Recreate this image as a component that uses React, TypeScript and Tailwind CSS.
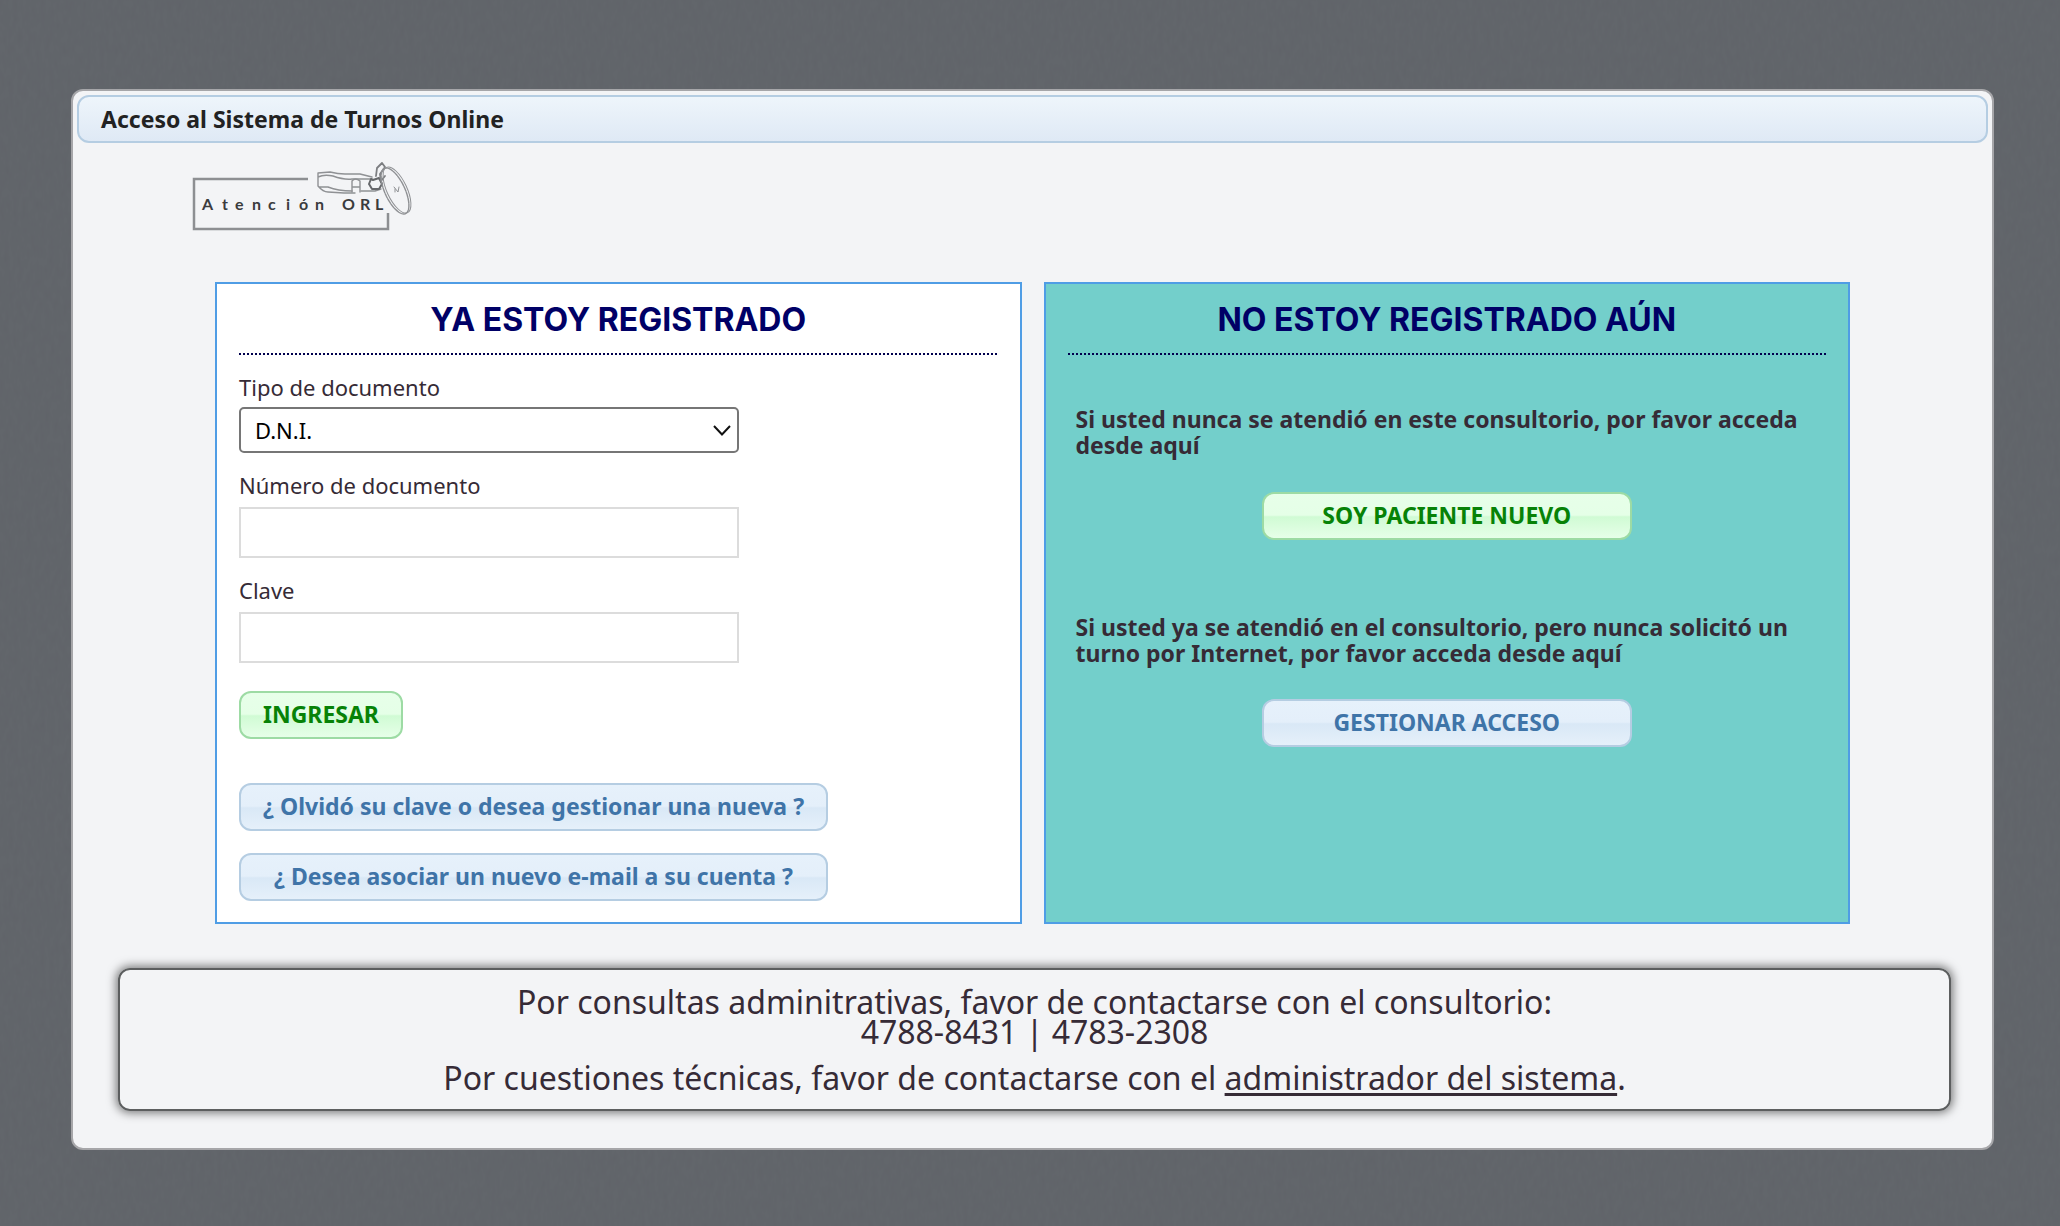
import type { ReactNode } from "react";

const BLUE_BUTTON =
  "border-[#b5cde2] bg-[linear-gradient(#e6f1fb_0%,#e4effa_48%,#d9e8f6_52%,#e5f0fa_100%)] text-[#3f74a8]";
const GREEN_BUTTON =
  "border-[#9ddba4] bg-[linear-gradient(#e7ffe9_0%,#e5ffe7_48%,#d0fbd4_52%,#e6ffe8_100%)] text-[#078207]";

function Button({
  tone,
  className = "",
  children,
}: {
  tone: "blue" | "green";
  className?: string;
  children: ReactNode;
}) {
  return (
    <button
      type="button"
      className={`h-12 cursor-pointer rounded-xl border-2 px-[22px] pb-0.5 text-[23px] leading-[26px] font-bold whitespace-nowrap ${
        tone === "blue" ? BLUE_BUTTON : GREEN_BUTTON
      } ${className}`}
    >
      {children}
    </button>
  );
}

function PanelTitle({ children }: { children: ReactNode }) {
  return (
    <>
      <h2 className="pt-[18px] pb-[15px] text-center font-['Inter',sans-serif] text-[32px] leading-9 font-bold text-[#000066]">
        {children}
      </h2>
      <div className="h-0.5 bg-[repeating-linear-gradient(90deg,#00004d_0px,#00004d_2px,transparent_2px,transparent_4px)]" />
    </>
  );
}

function TextField({ id, label, type }: { id: string; label: string; type: string }) {
  return (
    <div className="flex flex-col">
      <label htmlFor={id} className="mb-[9px] leading-[26px]">
        {label}
      </label>
      <input
        id={id}
        type={type}
        className="h-[51px] w-full border-2 border-[#dcdcdc] bg-white px-3 text-black"
      />
    </div>
  );
}

function Logo() {
  return (
    <svg
      role="img"
      aria-label="Atención ORL"
      viewBox="0 0 222 74"
      className="block h-[74px] w-[222px]"
      fill="none"
    >
      <path d="M116 19H2V69H196V53" stroke="#8d8f92" strokeWidth="2.5" />
      <text
        x="10 30 43 60 76 94 107 123 150 168 183"
        y="50"
        fontFamily="Lato, sans-serif"
        fontSize="16"
        fontWeight="700"
        fill="#3a3b3d"
      >
        AtenciónORL
      </text>
      <g stroke="#8f9194" strokeWidth="1.4" strokeLinejoin="round" strokeLinecap="round">
        <path d="M126 13L138 12Q146 14 153 14H168L180 17M126 13V26Q131 32 136 32L152 33H163M126 17Q132 14 141 16Q152 20 160 19H180M127 27H136Q146 31 160 31M169 31H183L189 29" />
        <path d="M160 32V21Q163 17 168 21V32M160 27H168" />
        <path d="M179 19L177 24L180 29H187L190 24L187 18L181 20Z" stroke="#66686b" strokeWidth="2" />
        <path d="M184 16L185 8L190 3L193 7L188 14L189 21L193 16" stroke="#7c7e81" strokeWidth="1.8" />
        <ellipse cx="203" cy="31" rx="10" ry="25" transform="rotate(-25 203 31)" strokeDasharray="5 1" />
        <ellipse cx="205" cy="30" rx="10" ry="25" transform="rotate(-25 205 30)" strokeWidth="1" />
        <path d="M202 27L206 32L207 27M203 29V32" strokeWidth="1" />
      </g>
    </svg>
  );
}

function Backdrop() {
  return (
    <svg aria-hidden="true" className="absolute inset-0 h-full w-full">
      <filter id="fabric" x="0" y="0" width="100%" height="100%">
        <feTurbulence type="fractalNoise" baseFrequency="0.22 0.09" numOctaves="2" seed="4" />
        <feColorMatrix values="0 0 0 0 0.1  0 0 0 0 0.1  0 0 0 0 0.12  0.35 0 0 0 -0.09" />
      </filter>
      <rect width="100%" height="100%" filter="url(#fabric)" />
    </svg>
  );
}

export default function App() {
  return (
    <div className="relative min-h-screen bg-[#62666b] pt-[89px] pr-[66px] pb-[75px] pl-[71px] font-['Noto_Sans',sans-serif] text-[22px] text-[#362b36]">
      <Backdrop />
      <main className="relative rounded-xl border-2 border-[#a6a6a9] bg-[#f3f4f6] p-1">
        <header className="flex h-12 items-center rounded-xl border-2 border-[#b5cde2] bg-gradient-to-b from-[#eef5fb] to-[#dfe9f5] px-[22px]">
          <h1 className="text-[23px] leading-[26px] font-bold text-[#222222]">
            Acceso al Sistema de Turnos Online
          </h1>
        </header>

        <div className="mt-[17px] ml-[115px]">
          <Logo />
        </div>

        <div className="mx-[138px] mt-12 grid grid-cols-2 gap-[22px]">
          <section className="border-2 border-[#4f9de5] bg-white px-[22px] pb-[21px]">
            <PanelTitle>YA ESTOY REGISTRADO</PanelTitle>
            <form className="mt-[19px] flex flex-col items-start">
              <div className="flex w-[500px] max-w-full flex-col gap-[19px]">
                <div className="flex flex-col">
                  <label htmlFor="tipo" className="mb-[7px] leading-[26px]">
                    Tipo de documento
                  </label>
                  <div className="relative">
                    <select
                      id="tipo"
                      className="block h-[46px] w-full appearance-none rounded-[5px] border-2 border-[#767676] bg-white px-3.5 text-black"
                    >
                      <option>D.N.I.</option>
                    </select>
                    <svg
                      aria-hidden="true"
                      viewBox="0 0 18 12"
                      className="pointer-events-none absolute top-[18px] right-2 h-3 w-[18px]"
                    >
                      <path d="M1 1L9 9.500L17 1" fill="none" stroke="#111" strokeWidth="2" />
                    </svg>
                  </div>
                </div>
                <TextField id="numero" label="Número de documento" type="text" />
                <TextField id="clave" label="Clave" type="password" />
              </div>
              <Button tone="green" className="mt-7">
                INGRESAR
              </Button>
              <div className="mt-11 flex flex-col gap-[22px]">
                <Button tone="blue">¿ Olvidó su clave o desea gestionar una nueva ?</Button>
                <Button tone="blue">¿ Desea asociar un nuevo e-mail a su cuenta ?</Button>
              </div>
            </form>
          </section>

          <section className="border-2 border-[#4f9de5] bg-[#73cfcb] px-[22px] pb-[21px]">
            <PanelTitle>NO ESTOY REGISTRADO AÚN</PanelTitle>
            <div className="mt-[51px] flex flex-col items-center text-[23px]">
              <p className="w-full px-2 leading-[26px] font-bold">
                Si usted nunca se atendió en este consultorio, por favor acceda desde aquí
              </p>
              <Button tone="green" className="mt-[34px] w-[370px]">
                SOY PACIENTE NUEVO
              </Button>
              <p className="mt-[74px] w-full px-2 leading-[26px] font-bold">
                Si usted ya se atendió en el consultorio, pero nunca solicitó un turno por Internet,
                por favor acceda desde aquí
              </p>
              <Button tone="blue" className="mt-[33px] w-[370px]">
                GESTIONAR ACCESO
              </Button>
            </div>
          </section>
        </div>

        <footer className="mt-11 mr-[37px] mb-[33px] ml-[41px] rounded-xl border-2 border-[#5c5e5f] pt-[17px] pb-4 text-center text-[32px] leading-[30px] shadow-[0_0_10px_2px_rgba(0,0,0,0.5)]">
          <p>Por consultas adminitrativas, favor de contactarse con el consultorio:</p>
          <p>4788-8431 | 4783-2308</p>
          <p className="mt-4">
            Por cuestiones técnicas, favor de contactarse con el{" "}
            <a href="#administrador" className="underline decoration-[3px] underline-offset-[3px]">
              administrador del sistema
            </a>
            .
          </p>
        </footer>
      </main>
    </div>
  );
}
